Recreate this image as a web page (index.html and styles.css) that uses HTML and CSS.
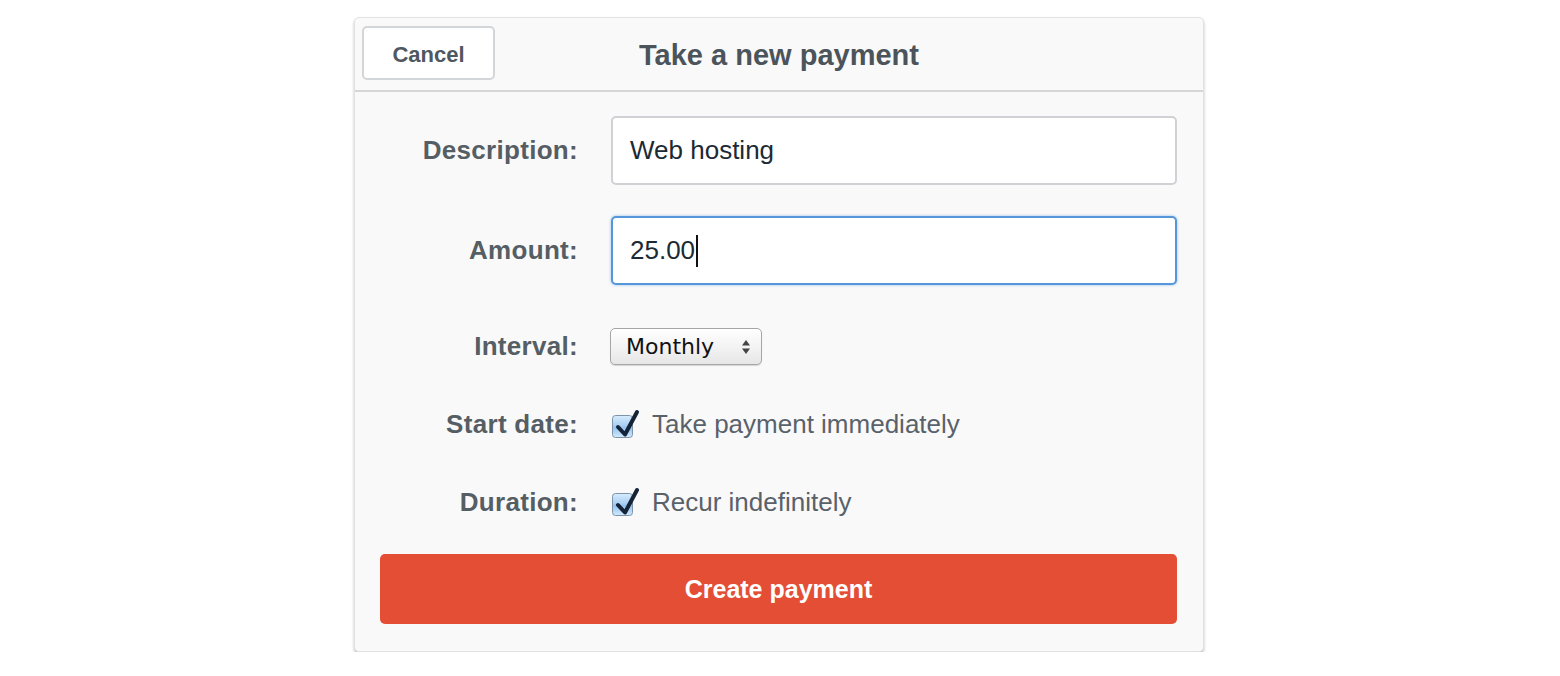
FILE: index.html
```html
<!DOCTYPE html>
<html>
<head>
<meta charset="utf-8">
<link rel="stylesheet" href="styles.css">
</head>
<body>
<div class="card">
  <div class="header">
    <div class="cancel">Cancel</div>
    <div class="title">Take a new payment</div>
  </div>
  <div class="body">
    <div class="row row-desc">
      <div class="label">Description:</div>
      <div class="field"><div class="input">Web hosting</div></div>
    </div>
    <div class="row row-amount">
      <div class="label">Amount:</div>
      <div class="field"><div class="input focus">25.00<span class="caret"></span></div></div>
    </div>
    <div class="row row-select">
      <div class="label">Interval:</div>
      <div class="field">
        <div class="select">
          <span class="select-text">Monthly</span>
          <svg class="arrows" width="10" height="16" viewBox="0 0 10 16"><path d="M5 1 L9 6.5 L1 6.5 Z" fill="#444"/><path d="M1 9.5 L9 9.5 L5 15 Z" fill="#444"/></svg>
        </div>
      </div>
    </div>
    <div class="row row-check1">
      <div class="label">Start date:</div>
      <div class="field check">
        <svg class="cb" width="30" height="34" viewBox="0 0 30 34">
          <defs>
            <linearGradient id="g1" x1="0" y1="0" x2="0" y2="1">
              <stop offset="0" stop-color="#d8ecfd"/>
              <stop offset="0.45" stop-color="#a9d0f3"/>
              <stop offset="0.55" stop-color="#94c3ee"/>
              <stop offset="1" stop-color="#d2eafd"/>
            </linearGradient>
          </defs>
          <rect x="1.5" y="10.5" width="20" height="22" rx="3" fill="url(#g1)" stroke="#7d93aa"/>
          <polyline points="7,22 14,29.5 26,7" fill="none" stroke="#142338" stroke-width="4" stroke-linecap="round" stroke-linejoin="round"/>
        </svg>
        <span class="check-text">Take payment immediately</span>
      </div>
    </div>
    <div class="row row-check2">
      <div class="label">Duration:</div>
      <div class="field check">
        <svg class="cb" width="30" height="34" viewBox="0 0 30 34">
          <defs>
            <linearGradient id="g2" x1="0" y1="0" x2="0" y2="1">
              <stop offset="0" stop-color="#d8ecfd"/>
              <stop offset="0.45" stop-color="#a9d0f3"/>
              <stop offset="0.55" stop-color="#94c3ee"/>
              <stop offset="1" stop-color="#d2eafd"/>
            </linearGradient>
          </defs>
          <rect x="1.5" y="10.5" width="20" height="22" rx="3" fill="url(#g2)" stroke="#7d93aa"/>
          <polyline points="7,22 14,29.5 26,7" fill="none" stroke="#142338" stroke-width="4" stroke-linecap="round" stroke-linejoin="round"/>
        </svg>
        <span class="check-text">Recur indefinitely</span>
      </div>
    </div>
    <div class="submit">Create payment</div>
  </div>
</div>
</body>
</html>
```

FILE: styles.css
```css
html, body {
  margin: 0;
  padding: 0;
  background: #ffffff;
}
body {
  padding-top: 17px;
  font-family: "Liberation Sans", Arial, sans-serif;
}
.card {
  width: 848px;
  margin-left: 354px;
  background: #f9f9f9;
  border: 1px solid #e2e2e2;
  border-radius: 5px;
  box-shadow: 0 2px 3px rgba(0,0,0,0.25);
}
.header {
  position: relative;
  height: 72px;
  border-bottom: 2px solid #d6d6d6;
  display: flex;
  align-items: center;
  justify-content: center;
}
.cancel {
  position: absolute;
  left: 7px;
  top: 8px;
  width: 133px;
  height: 54px;
  box-sizing: border-box;
  padding-top: 3px;
  background: #fff;
  border: 2px solid #d3d6d9;
  border-radius: 5px;
  display: flex;
  align-items: center;
  justify-content: center;
  font-weight: bold;
  font-size: 22px;
  color: #4f585f;
}
.title {
  font-weight: bold;
  font-size: 29px;
  color: #4b545b;
  margin-top: 2px;
}
.body {
  padding: 24px 26px 27px 25px;
}
.row {
  display: flex;
  align-items: center;
}
.label {
  width: 198px;
  flex: none;
  text-align: right;
  font-weight: bold;
  font-size: 26px;
  letter-spacing: 0.3px;
  color: #555e64;
}
.field {
  margin-left: 33px;
  flex: 1;
}
.input {
  height: 69px;
  box-sizing: border-box;
  background: #fff;
  border: 2px solid #cfd1d4;
  border-radius: 5px;
  padding-left: 17px;
  display: flex;
  align-items: center;
  font-size: 26px;
  color: #1c2a35;
}
.input.focus {
  border-color: #5597d8;
  box-shadow: 0 0 3px rgba(80,150,220,0.6);
}
.caret {
  display: inline-block;
  width: 2px;
  height: 32px;
  background: #111;
  margin-left: 1px;
}
.row-amount { margin-top: 31px; }
.row-select { margin-top: 43px; }
.row-check1 { margin-top: 41px; }
.row-check2 { margin-top: 41px; }
.select {
  width: 152px;
  height: 37px;
  box-sizing: border-box;
  margin-left: -1px;
  border: 1px solid #a6a6a6;
  border-radius: 5px;
  background: linear-gradient(#ffffff, #f1f1f1 60%, #e6e6e6);
  box-shadow: 0 1px 1px rgba(0,0,0,0.15);
  display: flex;
  align-items: center;
  padding-left: 15px;
  padding-right: 10px;
  justify-content: space-between;
}
.select-text {
  font-family: "DejaVu Sans", Verdana, sans-serif;
  font-size: 22px;
  color: #111;
}
.arrows {
  margin-top: 1px;
}
.check {
  display: flex;
  align-items: center;
  height: 37px;
}
.cb {
  flex: none;
  margin-top: -6px;
}
.check-text {
  margin-left: 11px;
  font-size: 26px;
  color: #59626a;
}
.submit {
  margin-top: 33px;
  height: 70px;
  border-radius: 5px;
  background: #e34e35;
  color: #fff;
  font-weight: bold;
  font-size: 25px;
  display: flex;
  align-items: center;
  justify-content: center;
}
```
